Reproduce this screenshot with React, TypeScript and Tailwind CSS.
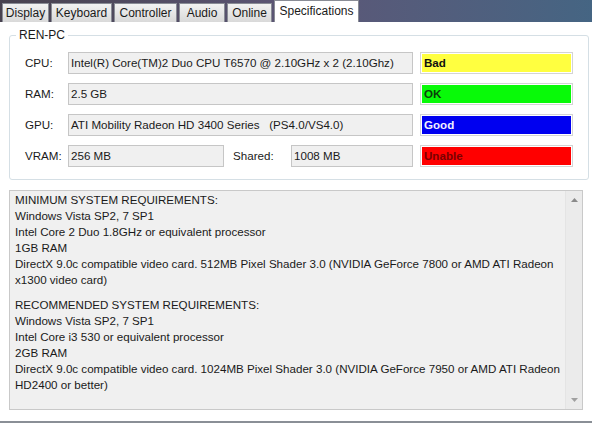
import React from "react";

const tabs = [
  { name: "Display", w: "w-[47px]" },
  { name: "Keyboard", w: "w-[61px]" },
  { name: "Controller", w: "w-[63px]" },
  { name: "Audio", w: "w-[46px]" },
  { name: "Online", w: "w-[45px]" },
  { name: "Specifications", w: "w-[85px]" },
];

type Row = {
  label: string;
  value: string;
  status: string;
  statusClass: string;
};

const rows: Row[] = [
  {
    label: "CPU:",
    value: "Intel(R) Core(TM)2 Duo CPU T6570 @ 2.10GHz x 2 (2.10Ghz)",
    status: "Bad",
    statusClass: "bg-[#ffff40] text-[#111111]",
  },
  { label: "RAM:", value: "2.5 GB", status: "OK", statusClass: "bg-[#08fa08] text-[#0b3d0b]" },
  {
    label: "GPU:",
    value: "ATI Mobility Radeon HD 3400 Series   (PS4.0/VS4.0)",
    status: "Good",
    statusClass: "bg-[#0000f0] text-[#f0f0ff]",
  },
];

const minimum = [
  "MINIMUM SYSTEM REQUIREMENTS:",
  "Windows Vista SP2, 7 SP1",
  "Intel Core 2 Duo 1.8GHz or equivalent processor",
  "1GB RAM",
  "DirectX 9.0c compatible video card. 512MB Pixel Shader 3.0 (NVIDIA GeForce 7800 or AMD ATI Radeon x1300 video card)",
];

const recommended = [
  "RECOMMENDED SYSTEM REQUIREMENTS:",
  "Windows Vista SP2, 7 SP1",
  "Intel Core i3 530 or equivalent processor",
  "2GB RAM",
  "DirectX 9.0c compatible video card. 1024MB Pixel Shader 3.0 (NVIDIA GeForce 7950 or AMD ATI Radeon HD2400 or better)",
];

function ReadOnlyBox({ text, className }: { text: string; className: string }) {
  return (
    <div
      className={`h-[22px] border border-[#c6c6c6] bg-[#f0f0f0] pl-[2px] leading-[20px] whitespace-pre ${className}`}
    >
      {text}
    </div>
  );
}

function StatusBox({ text, className }: { text: string; className: string }) {
  return (
    <div className="h-[22px] w-[153px] border border-[#d4d4d4] bg-white p-[1px]">
      <div className={`h-full pl-[2px] font-bold leading-[18px] ${className}`}>{text}</div>
    </div>
  );
}

export default function App() {
  return (
    <div
      className="flex h-[423px] w-[592px] flex-col bg-gradient-to-r from-[#48424f] via-[#5c5676] to-[#456583] text-[11.6px] text-[#1a1a1a]"
      style={{ fontFamily: '"Liberation Sans", Arial, sans-serif' }}
    >
      {/* tab strip */}
      <div className="flex h-[22px] items-end gap-[2px] pl-[2px] text-[12px]">
        {tabs.map((t) =>
          t.name === "Specifications" ? (
            <div
              key={t.name}
              className={`h-[22px] border border-b-0 border-[#898c95] bg-white pt-[2px] text-center leading-[16px] ${t.w}`}
            >
              {t.name}
            </div>
          ) : (
            <div
              key={t.name}
              className={`h-[19px] border border-b-0 border-[#898c95] bg-gradient-to-b from-[#f2f2f2] to-[#d9d9d9] text-center leading-[18px] ${t.w}`}
            >
              {t.name}
            </div>
          )
        )}
      </div>

      {/* page body */}
      <div className="flex flex-1 flex-col border-b-2 border-[#8a8f96] bg-white px-[9px] pt-[6px] pb-[11px]">
        <fieldset className="rounded-[3px] border border-[#d5dfe5] px-[15px] pt-[10px] pb-[12px]">
          <legend className="-ml-[9px] px-[3px] text-[12px] leading-[14px]">REN-PC</legend>
          <div className="flex flex-col gap-[9px]">
            {rows.map((r) => (
              <div key={r.label} className="flex items-center">
                <div className="w-[43px]">{r.label}</div>
                <ReadOnlyBox text={r.value} className="w-[345px]" />
                <div className="w-[7px]" />
                <StatusBox text={r.status} className={r.statusClass} />
              </div>
            ))}
            <div className="flex items-center">
              <div className="w-[43px]">VRAM:</div>
              <ReadOnlyBox text="256 MB" className="w-[156px]" />
              <div className="w-[67px] pl-[9px]">Shared:</div>
              <ReadOnlyBox text="1008 MB" className="w-[122px]" />
              <div className="w-[7px]" />
              <StatusBox text="Unable" className="bg-[#ff0000] text-[#7a0000]" />
            </div>
          </div>
        </fieldset>

        {/* requirements text */}
        <div className="mt-[10px] flex flex-1 border border-[#c9c9c9] bg-[#f0f0f0]">
          <div className="flex-1 px-[5px] pt-[1px] leading-[16px]">
            {minimum.map((l, i) => (
              <div key={i}>{l}</div>
            ))}
            <div className="h-[9px]" />
            {recommended.map((l, i) => (
              <div key={i}>{l}</div>
            ))}
          </div>
          <div className="flex w-[17px] flex-col items-center justify-between border-l border-[#e4e4e4] bg-[#ebebeb] py-[7px]">
            <svg width="7" height="4" viewBox="0 0 7 4">
              <path d="M0 4 L3.5 0 L7 4 Z" fill="#8a8a8a" />
            </svg>
            <svg width="7" height="4" viewBox="0 0 7 4">
              <path d="M0 0 L3.5 4 L7 0 Z" fill="#a0a0a0" />
            </svg>
          </div>
        </div>
      </div>
    </div>
  );
}
